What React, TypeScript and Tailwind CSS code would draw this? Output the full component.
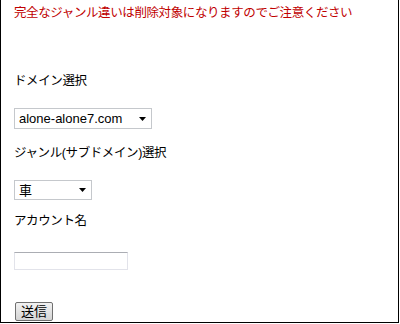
const JP = "font-['Tahoma','Liberation_Sans','Noto_Sans_CJK_JP',sans-serif]";

function Arrow() {
  return (
    <svg width="7" height="4" viewBox="0 0 7 4" className="absolute right-[5px] top-1/2 -translate-y-1/2">
      <path d="M0 0H7L3.5 4Z" fill="#000" />
    </svg>
  );
}

function FakeSelect({ value, width, height }: { value: string; width: string; height: string }) {
  return (
    <div className={`relative ${width} ${height} border border-[#c5c8cc] bg-white flex items-center pl-[4px] text-[13px] text-black`}>
      <span className="leading-none">{value}</span>
      <Arrow />
    </div>
  );
}

export default function App() {
  return (
    <div className={`w-[399px] h-[323px] bg-white border-l border-r border-b border-black overflow-hidden pl-[13px] ${JP}`}>
      <p className="mt-[3px] leading-[20px] text-[12.5px] tracking-[-0.4px] text-[#c00000]">
        完全なジャンル違いは削除対象になりますのでご注意ください
      </p>

      <p className="mt-[48px] leading-[20px] text-[12.5px] tracking-[-0.4px] text-black">ドメイン選択</p>
      <div className="mt-[17px]">
        <FakeSelect value="alone-alone7.com" width="w-[138px]" height="h-[21px]" />
      </div>

      <p className="mt-[14px] leading-[20px] text-[12.5px] tracking-[-0.4px] text-black">ジャンル(サブドメイン)選択</p>
      <div className="mt-[17px]">
        <FakeSelect value="車" width="w-[78px]" height="h-[20px]" />
      </div>

      <p className="mt-[11px] leading-[20px] text-[12.5px] tracking-[-0.4px] text-black">アカウント名</p>
      <input
        type="text"
        className="mt-[21px] block w-[114px] h-[18px] border border-[#e2e3ea] border-t-[#abadb3] bg-white outline-none"
      />

      <button
        type="button"
        className="mt-[32px] ml-[1px] block w-[38px] h-[19px] rounded-[2px] border border-[#707070] bg-gradient-to-b from-[#f2f2f2] to-[#d4d4d4] text-[13px] leading-none text-black"
      >
        送信
      </button>
    </div>
  );
}
